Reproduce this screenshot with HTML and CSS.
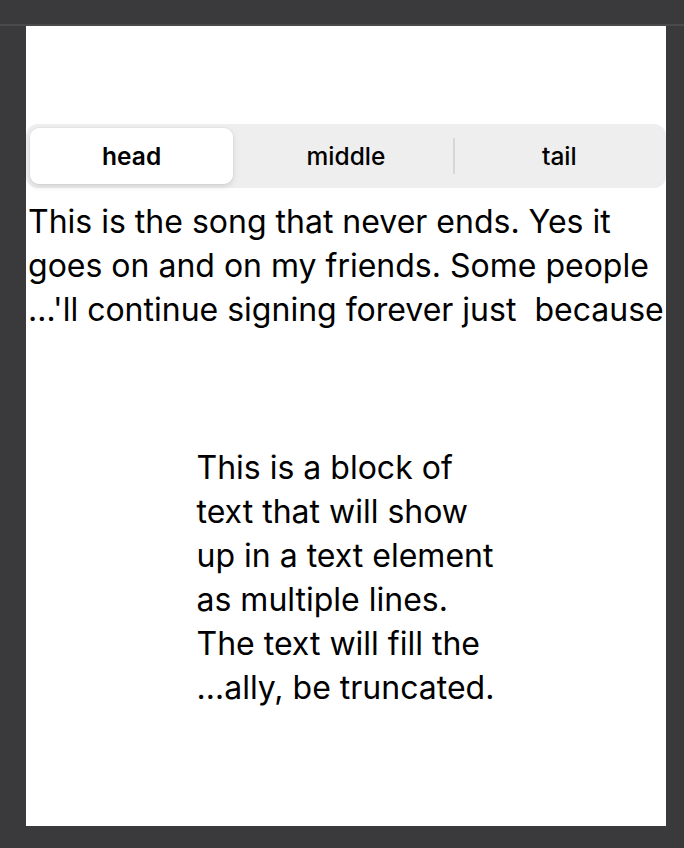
FILE: index.html
```html
<!DOCTYPE html>
<html>
<head>
<meta charset="utf-8">
<link rel="stylesheet" href="styles.css">
</head>
<body>
<div class="topline"></div>
<main class="panel">
  <div class="segmented">
    <div class="seg"><span class="seg-selected">head</span></div>
    <div class="seg">middle</div>
    <div class="seg seg-divided">tail</div>
  </div>
  <p class="song">This is the song that never ends. Yes it
goes on and on my friends. Some people
…'ll continue signing forever just  because</p>
  <p class="block">This is a block of
text that will show
up in a text element
as multiple lines.
The text will fill the
…ally, be truncated.</p>
</main>
</body>
</html>
```
FILE: styles.css
```css
html, body {
  margin: 0;
  padding: 0;
  background: #3a3a3c;
  height: 848px;
  overflow: hidden;
  font-family: Inter, "Noto Sans", sans-serif;
  color: #000;
}
.topline {
  height: 2px;
  margin-top: 24px;
  background: #4a4a4c;
}
.panel {
  width: 640px;
  height: 800px;
  margin-left: 26px;
  background: #fff;
  padding-top: 98px;
  box-sizing: border-box;
}
.segmented {
  height: 64px;
  background: #eeeeef;
  border-radius: 12px;
  display: grid;
  grid-template-columns: 1fr 1fr 1fr;
}
.seg {
  display: flex;
  align-items: center;
  justify-content: center;
  font-size: 24.5px;
  font-weight: 500;
  position: relative;
}
.seg-selected {
  flex: 1;
  align-self: stretch;
  display: flex;
  align-items: center;
  justify-content: center;
  margin: 4px 6px 4px 4px;
  background: #fff;
  border-radius: 9px;
  font-weight: 600;
  box-shadow: 0 3px 6px rgba(0,0,0,0.10), 0 0 0 1px rgba(0,0,0,0.03);
}
.seg-divided::before {
  content: "";
  position: absolute;
  left: 0;
  top: 14px;
  bottom: 14px;
  width: 2px;
  background: #d6d6d8;
  border-radius: 1px;
}
.song {
  margin: 12px 0 0 2px;
  font-size: 32px;
  line-height: 44px;
  white-space: pre;
}
.block {
  width: 300px;
  margin: 114px auto 0;
  padding-left: 1px;
  font-size: 32px;
  line-height: 44px;
  white-space: pre;
}
```
